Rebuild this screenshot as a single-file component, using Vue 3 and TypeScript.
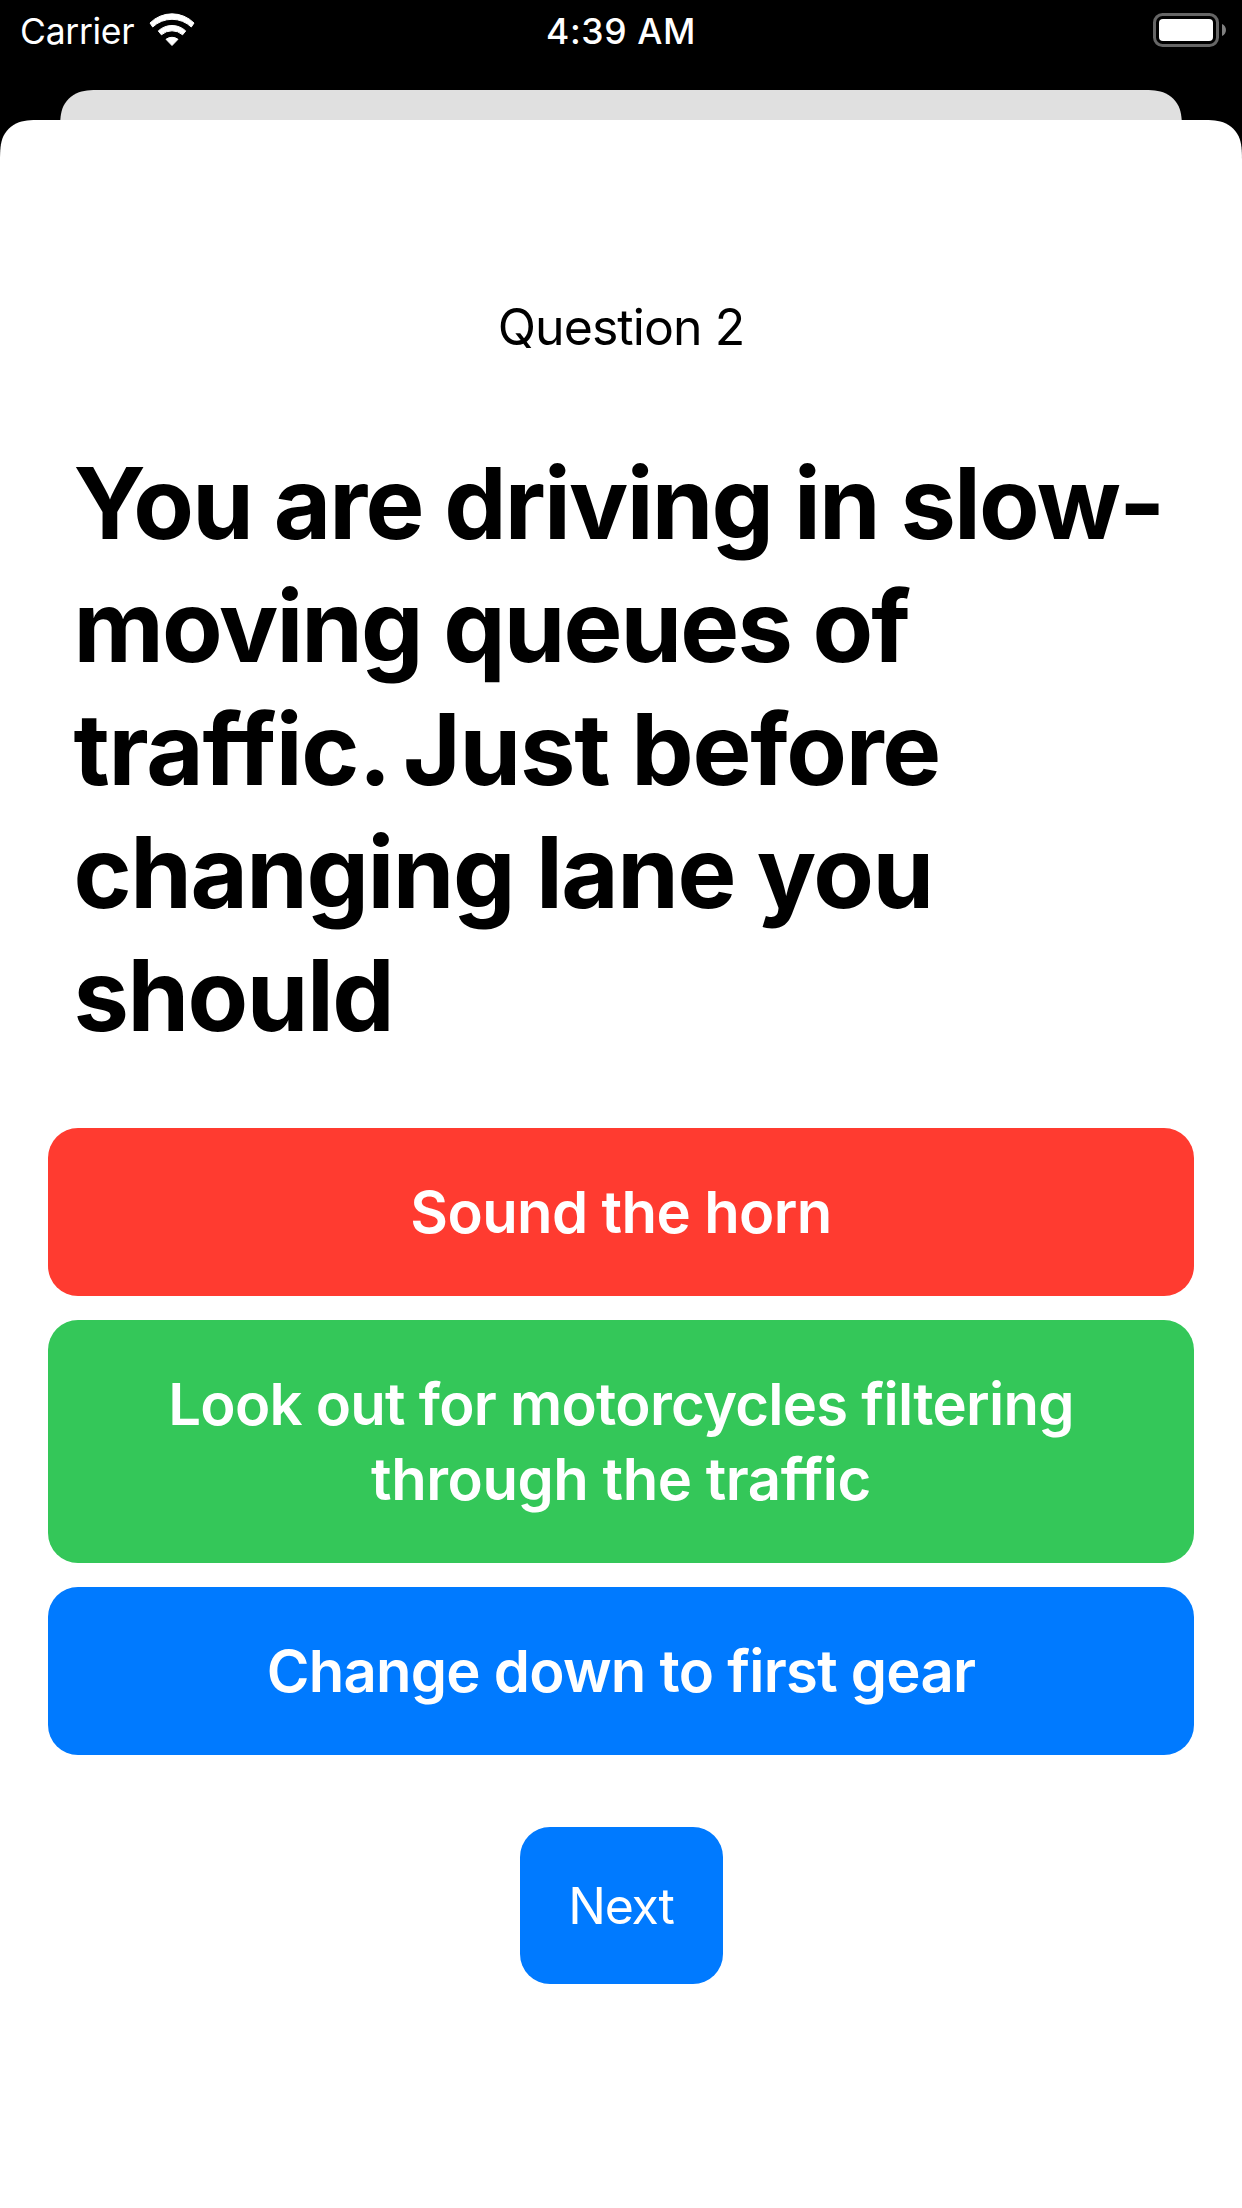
<script setup lang="ts">
interface Run {
  text: string
  tracking: number
  kern?: number
}

interface Answer {
  tone: 'red' | 'green' | 'blue'
  lines: Run[]
}

const question: Run[][] = [
  [{ text: 'You are driving in slow-', tracking: -1.8 }],
  [{ text: 'moving queues of', tracking: -1.9 }],
  [
    { text: 'traffic. ', tracking: -1.2, kern: -6.5 },
    { text: 'Just before', tracking: -1.25 },
  ],
  [{ text: 'changing lane you', tracking: -1.5 }],
  [{ text: 'should', tracking: -1.5 }],
]

const answers: Answer[] = [
  { tone: 'red', lines: [{ text: 'Sound the horn', tracking: -0.6 }] },
  {
    tone: 'green',
    lines: [
      { text: 'Look out for motorcycles filtering', tracking: -0.72 },
      { text: 'through the traffic', tracking: -0.45 },
    ],
  },
  { tone: 'blue', lines: [{ text: 'Change down to first gear', tracking: -0.73 }] },
]
</script>

<template>
  <div class="screen">
    <header class="status">
      <div class="left">
        <span class="carrier">Carrier</span>
        <svg class="wifi" width="48" height="36" viewBox="148 12 48 36">
          <g fill="#fff" stroke="#fff" stroke-width="1" stroke-linejoin="round">
            <path d="M150 23A31 31 0 0 1 194 23L191.300 27A28 28 0 0 0 152.700 27Z" />
            <path d="M158.300 30.900A20 20 0 0 1 185.700 30.900L182.600 34.800A16 16 0 0 0 161.400 34.800Z" />
            <path d="M166 39.300A10 10 0 0 1 178 39.300L172 45.500Z" />
          </g>
        </svg>
      </div>
      <span class="time">4:39 AM</span>
      <div class="right">
        <svg width="76" height="36" viewBox="1152 12 76 36">
          <rect x="1154.500" y="14.500" width="63" height="31" rx="8" fill="none" stroke="#666" stroke-width="3" />
          <rect x="1159" y="19" width="54" height="22" rx="4" fill="#fff" />
          <path d="M1222 24C1227.300 26 1227.300 34 1222 36Z" fill="#808080" />
        </svg>
      </div>
    </header>
    <div class="behind"></div>
    <main class="sheet">
      <p class="number">Question 2</p>
      <h1 class="question">
        <span v-for="(runs, i) in question" :key="i" class="line">
          <span
            v-for="r in runs"
            :key="r.text"
            :style="{ letterSpacing: r.tracking + 'px', marginRight: (r.kern ?? 0) + 'px' }"
          >{{ r.text }}</span>
        </span>
      </h1>
      <div class="answers">
        <button v-for="a in answers" :key="a.tone" class="answer" :class="a.tone">
          <span v-for="l in a.lines" :key="l.text" class="line" :style="{ letterSpacing: l.tracking + 'px' }">{{ l.text }}</span>
        </button>
      </div>
      <button class="next">Next</button>
    </main>
  </div>
</template>

<style>
body {
  margin: 0;
  background: #000;
}
</style>

<style scoped>
.screen {
  width: 1242px;
  height: 2208px;
  background: #000;
  font-family: Inter, 'Liberation Sans', sans-serif;
  display: flex;
  flex-direction: column;
  overflow: hidden;
}
.status {
  height: 90px;
  flex: none;
  display: grid;
  grid-template-columns: 1fr auto 1fr;
  align-items: start;
  color: #fff;
  font-size: 35.5px;
  line-height: 64px;
}
.left {
  display: flex;
  padding-left: 20px;
}
.carrier {
  width: 128px;
  letter-spacing: -0.3px;
}
.wifi {
  margin-top: 12px;
}
.time {
  font-weight: 500;
  letter-spacing: 0.6px;
}
.right {
  display: flex;
  justify-content: flex-end;
  padding: 12px 14px 0 0;
}
.behind {
  height: 30px;
  flex: none;
  margin: 0 60px;
  background: #e0e0e0;
  clip-path: path('M0 45.900C0 32.650 0 26.050 2.250 18.940C5.070 11.180 11.180 5.070 18.940 2.250C26.050 0 32.650 0 45.900 0H1076.100C1089.350 0 1095.950 0 1103.060 2.250C1110.820 5.070 1116.930 11.180 1119.750 18.940C1122 26.050 1122 32.650 1122 45.900Z');
}
.sheet {
  flex: 1;
  background: #fff;
  display: flex;
  flex-direction: column;
  align-items: center;
  clip-path: path('M0 45.900C0 32.650 0 26.050 2.250 18.940C5.070 11.180 11.180 5.070 18.940 2.250C26.050 0 32.650 0 45.900 0H1196.100C1209.350 0 1215.950 0 1223.060 2.250C1230.820 5.070 1236.930 11.180 1239.750 18.940C1242 26.050 1242 32.650 1242 45.900V2088H0Z');
}
.number {
  margin: 177px 0 0;
  font-size: 50px;
  line-height: 60px;
  letter-spacing: -0.95px;
  color: #000;
}
.question {
  align-self: stretch;
  margin: 85px 0 0 73.5px;
  font-size: 99px;
  line-height: 123px;
  font-weight: 700;
  color: #000;
}
.line {
  display: block;
  white-space: pre;
}
.answers {
  align-self: stretch;
  margin: 71px 48px 0;
  display: flex;
  flex-direction: column;
  gap: 24px;
}
button {
  border: 0;
  margin: 0;
  color: #fff;
  font-family: inherit;
  border-radius: 30px;
}
.answer {
  padding: 47px 0 46px;
  font-size: 58px;
  line-height: 75px;
  font-weight: 600;
}
.red {
  background: #ff3b30;
}
.green {
  background: #34c759;
}
.blue {
  background: #007aff;
}
.next {
  width: 203px;
  height: 157px;
  margin-top: 72px;
  padding: 0;
  font-size: 50px;
  line-height: 60px;
  letter-spacing: -1.2px;
  background: #007aff;
}
</style>
